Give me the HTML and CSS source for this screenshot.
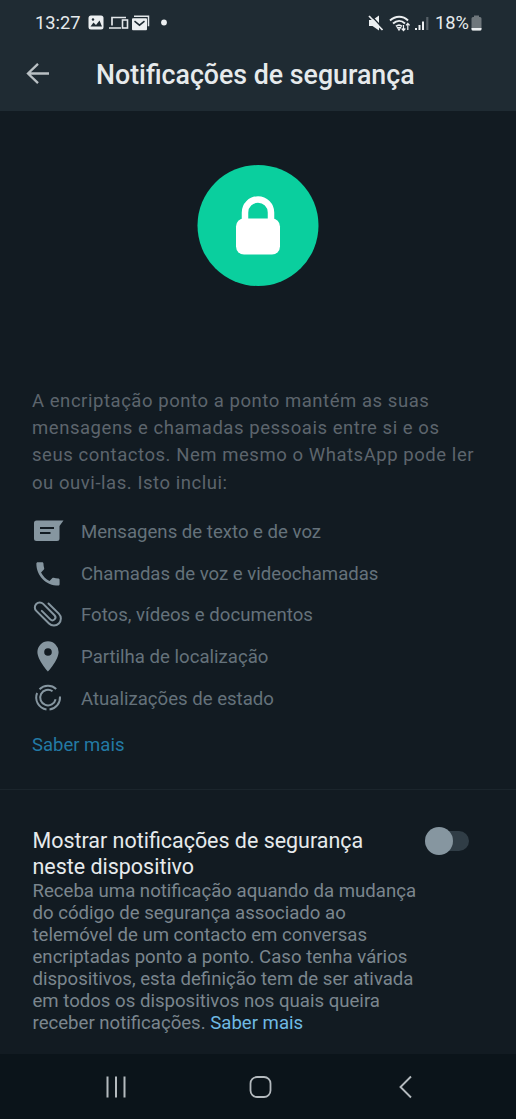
FILE: index.html
```html
<!DOCTYPE html>
<html lang="pt">
<head>
<meta charset="utf-8">
<title>Notificações de segurança</title>
<link rel="stylesheet" href="styles.css">
</head>
<body>
<div class="screen">
  <header class="header">
    <div class="status">
      <div class="status-left">
        <span class="clock">13:27</span>
        <svg class="st-notif" width="80" height="16" viewBox="0 0 80 16">
          <rect x="0.5" y="0.5" width="15" height="14" rx="2.5" fill="#eceff1"/>
          <path d="M2.5 11.500l3-4 2.500 2.500 3.500-4.500 2.500 6z" fill="#1f2b33"/>
          <circle cx="5" cy="4.500" r="1.200" fill="#1f2b33"/>
          <path d="M24 10.500V2.500h14M21 13h12" fill="none" stroke="#e3e7ea" stroke-width="1.700"/>
          <rect x="34.500" y="5" width="5" height="8" fill="none" stroke="#e3e7ea" stroke-width="1.600"/>
          <path d="M46 1.200h14.500v10" fill="none" stroke="#e3e7ea" stroke-width="1.500"/>
          <rect x="44" y="3.200" width="15" height="12" rx="1" fill="#eceff1"/>
          <path d="M46.500 6.200l5 4 5-4" fill="none" stroke="#1f2b33" stroke-width="1.500"/>
          <circle cx="76" cy="7.500" r="2.900" fill="#eceff1"/>
        </svg>
      </div>
      <div class="status-right">
        <svg width="64" height="18" viewBox="0 0 64 18">
          <path d="M1 6h3.500L11 1.500v15L4.500 12H1z" fill="#eceff1"/>
          <path d="M2.500 1l13 14" stroke="#1f2b33" stroke-width="1.500"/>
          <path d="M1 2l13.500 14" stroke="#eceff1" stroke-width="1.800"/>
          <path d="M22 6.500c5.500-5 13-5 18 0M25 9.500c3.800-3.400 8.500-3.400 12 0M28 12.400c2-1.700 4-1.700 6 0" fill="none" stroke="#eceff1" stroke-width="1.900"/>
          <path d="M29.500 13.500h3L31 16zM35.500 11v5.500M33.700 14.500l1.800 2 1.800-2M39.800 16V9.500M38 11.300l1.800-2 1.800 2" fill="none" stroke="#eceff1" stroke-width="1.200"/>
          <path d="M48 14v2M51.500 11v5M55 7.500V16" stroke="#eceff1" stroke-width="2"/>
          <path d="M59.300 3v13" stroke="#566067" stroke-width="2.200"/>
        </svg>
        <span class="battery-text">18%</span>
        <svg width="11" height="16" viewBox="0 0 11 16">
          <path d="M3 2V.5h5V2h1q1.500 0 1.500 1.500V14q0 1.500-1.500 1.500H2Q.5 15.500.5 14V3.500Q.5 2 2 2z" fill="#6f777c"/>
          <path d="M.5 13h10v1q0 1.500-1.500 1.500H2Q.5 15.500.5 14z" fill="#eceff1"/>
        </svg>
      </div>
    </div>
    <div class="titlebar">
      <svg width="24" height="24" viewBox="0 0 24 24" fill="none" stroke="#b9c0c4" stroke-width="2.300"><path d="M23 10.500H2.500M12 .8L2 10.500l10 9.700"/></svg>
      <h1 class="title">Notificações de segurança</h1>
    </div>
  </header>

  <main class="content">
    <div class="hero">
      <svg width="122" height="122" viewBox="0 0 122 122">
        <circle cx="61" cy="60.500" r="60.500" fill="#0acf9e"/>
        <rect x="39" y="53.500" width="44" height="36" rx="8" fill="#fff"/>
        <path d="M48 58V47.500a13 13 0 0 1 26 0V58" fill="none" stroke="#fff" stroke-width="6.500"/>
      </svg>
    </div>
    <p class="intro">A encriptação ponto a ponto mantém as suas<br>mensagens e chamadas pessoais entre si e os<br>seus contactos. Nem mesmo o WhatsApp pode ler<br>ou ouvi-las. Isto inclui:</p>
    <ul class="features">
      <li class="feature">
        <svg width="32" height="32" viewBox="0 0 32 32"><path d="M4.500 4.500H31.500L27.500 10V22.500q0 2.500-2.500 2.500H4.500Q2 25 2 22.500V7Q2 4.500 4.500 4.500z" fill="#8696a0"/><path d="M8 12h14M8 17h10.500" stroke="#121b22" stroke-width="2"/></svg>
        <span>Mensagens de texto e de voz</span>
      </li>
      <li class="feature">
        <svg width="32" height="32" viewBox="0 0 32 32"><path transform="translate(.5 .5) scale(1.290)" d="M6.620 10.790c1.440 2.830 3.760 5.140 6.590 6.590l2.200-2.200c.27-.27.67-.36 1.020-.24 1.120.37 2.330.57 3.570.57.550 0 1 .45 1 1V20c0 .55-.45 1-1 1-9.390 0-17-7.610-17-17 0-.55.45-1 1-1h3.500c.55 0 1 .45 1 1 0 1.250.2 2.450.57 3.570.11.350.03.740-.25 1.020l-2.200 2.200z" fill="#8696a0"/></svg>
        <span>Chamadas de voz e videochamadas</span>
      </li>
      <li class="feature">
        <svg width="32" height="32" viewBox="0 0 32 32" fill="none" stroke="#8696a0" stroke-width="2" stroke-linecap="round"><path d="M16.500 4.500L26.800 14.600A6.900 6.900 0 0 1 17 24.500L4.300 11.900A4.900 4.900 0 0 1 11.200 4.900L22.500 16.200A2.950 2.950 0 0 1 18.300 20.400L9.800 11.900"/></svg>
        <span>Fotos, vídeos e documentos</span>
      </li>
      <li class="feature">
        <svg width="32" height="32" viewBox="0 0 32 32"><path fill-rule="evenodd" d="M16 .3A10.600 10.600 0 0 0 5.400 10.900C5.400 18.800 16 30.500 16 30.500S26.600 18.800 26.600 10.900A10.600 10.600 0 0 0 16 .3zM16 7.200a3.800 3.800 0 1 1 0 7.600a3.800 3.800 0 1 1 0-7.600z" fill="#8696a0"/></svg>
        <span>Partilha de localização</span>
      </li>
      <li class="feature">
        <svg width="32" height="32" viewBox="0 0 32 32" fill="none" stroke="#8696a0" stroke-width="2"><path d="M7.500 6.300A12 12 0 0 1 24.200 5.900M5.100 10A12 12 0 0 0 14.500 26.400M17.500 26.400A12 12 0 0 0 28 13.500M20.500 8.200A7.800 7.800 0 1 0 23.600 16.200"/></svg>
        <span>Atualizações de estado</span>
      </li>
    </ul>
    <a class="learn">Saber mais</a>
  </main>

  <section class="setting">
    <div class="setting-copy">
      <h2 class="setting-title">Mostrar notificações de segurança<br>neste dispositivo</h2>
      <p class="setting-text">Receba uma notificação aquando da mudança<br>do código de segurança associado ao<br>telemóvel de um contacto em conversas<br>encriptadas ponto a ponto. Caso tenha vários<br>dispositivos, esta definição tem de ser ativada<br>em todos os dispositivos nos quais queira<br>receber notificações. <a class="link">Saber mais</a></p>
    </div>
    <div class="switch"><span class="knob"></span></div>
  </section>

  <nav class="navbar">
    <svg width="24" height="24" viewBox="0 0 24 24" stroke="#b4babe" stroke-width="2"><path d="M3.500 1.500v21M12 1.500v21M20.500 1.500v21"/></svg>
    <svg width="24" height="24" viewBox="0 0 24 24"><rect x="1.500" y="2" width="20" height="20" rx="6.500" fill="none" stroke="#b4babe" stroke-width="1.800"/></svg>
    <svg width="24" height="24" viewBox="0 0 24 24"><path d="M18 1.500L7.500 12 18 22.500" fill="none" stroke="#b4babe" stroke-width="1.900"/></svg>
  </nav>
</div>
</body>
</html>
```

FILE: styles.css
```css
* { box-sizing: border-box; }
body, h1, h2, p, ul { margin: 0; padding: 0; }
body { background: #121b22; font-family: Roboto, sans-serif; }
svg { display: block; flex: none; }
.screen { width: 516px; height: 1119px; display: flex; flex-direction: column; overflow: hidden; white-space: nowrap; }
.header { height: 111px; background: #1f2b33; flex: none; }
.status { height: 45px; padding: 0 34px 0 35px; display: flex; justify-content: space-between; align-items: center; color: #e6eaec; }
.status-left, .status-right { display: flex; align-items: center; }
.clock { font-size: 18.300px; width: 53px; }
.battery-text { font-size: 18.300px; margin: 0 2px 0 3px; }
.titlebar { display: flex; align-items: center; padding-left: 26px; gap: 46px; height: 59px; }
.title { font-size: 26.750px; font-weight: 500; color: #e6eaec; }
.content { height: 679px; flex: none; border-bottom: 1px solid #1b252c; padding-left: 32px; }
.hero { padding: 54px 0 0 165px; height: 277px; }
.intro { font-size: 18.500px; line-height: 27.200px; letter-spacing: .55px; color: #5d656d; }
.features { list-style: none; margin-top: 14.600px; }
.feature { display: flex; align-items: center; gap: 17px; height: 41.600px; font-size: 18.600px; color: #65727b; }
.learn { display: block; margin-top: 14px; font-size: 18.500px; line-height: 24px; color: #237aa5; }
.setting { height: 264px; flex: none; display: flex; justify-content: space-between; padding: 38px 47px 0 32.500px; }
.setting-title { font-size: 21.450px; font-weight: 400; line-height: 26px; color: #e6eaec; }
.setting-text { font-size: 18.600px; line-height: 22px; color: #7b868e; }
.link { color: #6fb9e3; }
.switch { width: 38px; height: 20px; border-radius: 10px; background: #303d46; margin-top: 3px; display: flex; align-items: center; }
.knob { width: 28px; height: 28px; border-radius: 50%; background: #8696a0; flex: none; margin-left: -6px; }
.navbar { flex: 1; background: #0b141a; display: flex; justify-content: space-between; align-items: center; padding: 0 99px 0 104px; }
```
